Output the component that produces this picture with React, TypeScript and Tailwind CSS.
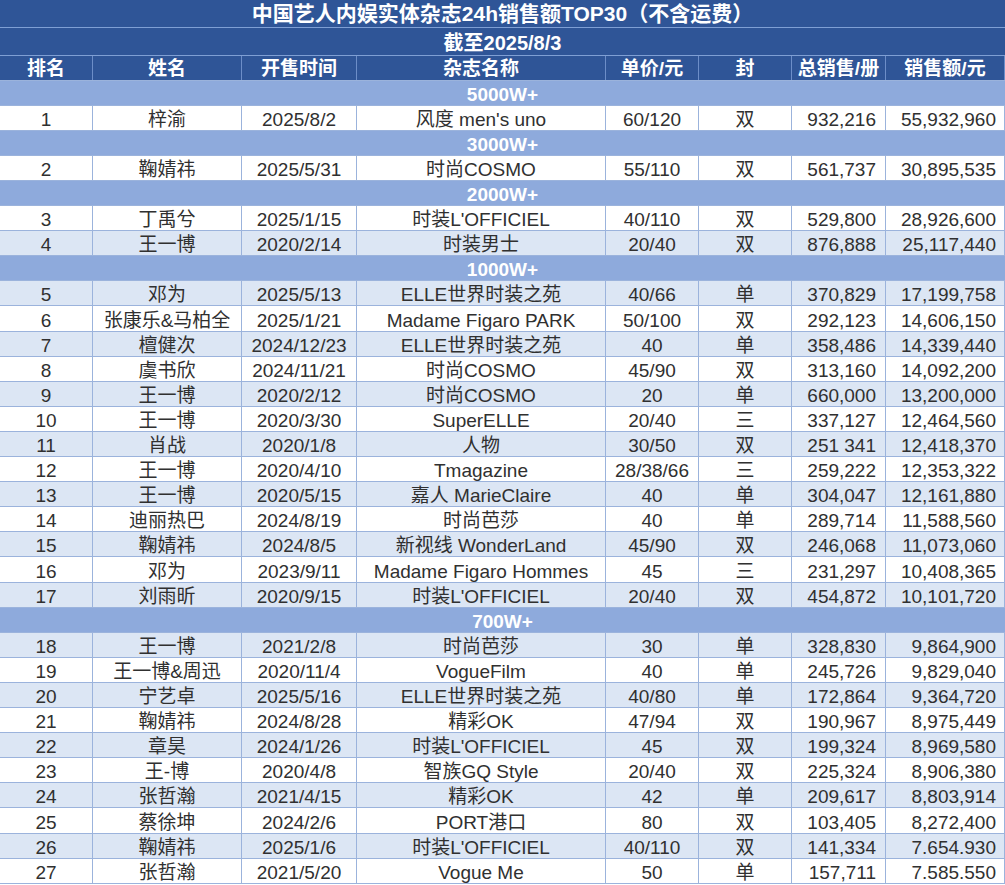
import React from 'react'

type Row = {
  rank: number
  name: string
  date: string
  mag: string
  price: string
  cover: string
  total: string
  amount: string
}

type Section = { label: string; rows: Row[] }

const r = (
  rank: number,
  name: string,
  date: string,
  mag: string,
  price: string,
  cover: string,
  total: string,
  amount: string
): Row => ({ rank, name, date, mag, price, cover, total, amount })

const SECTIONS: Section[] = [
  { label: '5000W+', rows: [r(1, '梓渝', '2025/8/2', "风度 men's uno", '60/120', '双', '932,216', '55,932,960')] },
  { label: '3000W+', rows: [r(2, '鞠婧祎', '2025/5/31', '时尚COSMO', '55/110', '双', '561,737', '30,895,535')] },
  {
    label: '2000W+',
    rows: [
      r(3, '丁禹兮', '2025/1/15', "时装L'OFFICIEL", '40/110', '双', '529,800', '28,926,600'),
      r(4, '王一博', '2020/2/14', '时装男士', '20/40', '双', '876,888', '25,117,440'),
    ],
  },
  {
    label: '1000W+',
    rows: [
      r(5, '邓为', '2025/5/13', 'ELLE世界时装之苑', '40/66', '单', '370,829', '17,199,758'),
      r(6, '张康乐&马柏全', '2025/1/21', 'Madame Figaro PARK', '50/100', '双', '292,123', '14,606,150'),
      r(7, '檀健次', '2024/12/23', 'ELLE世界时装之苑', '40', '单', '358,486', '14,339,440'),
      r(8, '虞书欣', '2024/11/21', '时尚COSMO', '45/90', '双', '313,160', '14,092,200'),
      r(9, '王一博', '2020/2/12', '时尚COSMO', '20', '单', '660,000', '13,200,000'),
      r(10, '王一博', '2020/3/30', 'SuperELLE', '20/40', '三', '337,127', '12,464,560'),
      r(11, '肖战', '2020/1/8', '人物', '30/50', '双', '251 341', '12,418,370'),
      r(12, '王一博', '2020/4/10', 'Tmagazine', '28/38/66', '三', '259,222', '12,353,322'),
      r(13, '王一博', '2020/5/15', '嘉人 MarieClaire', '40', '单', '304,047', '12,161,880'),
      r(14, '迪丽热巴', '2024/8/19', '时尚芭莎', '40', '单', '289,714', '11,588,560'),
      r(15, '鞠婧祎', '2024/8/5', '新视线 WonderLand', '45/90', '双', '246,068', '11,073,060'),
      r(16, '邓为', '2023/9/11', 'Madame Figaro Hommes', '45', '三', '231,297', '10,408,365'),
      r(17, '刘雨昕', '2020/9/15', "时装L'OFFICIEL", '20/40', '双', '454,872', '10,101,720'),
    ],
  },
  {
    label: '700W+',
    rows: [
      r(18, '王一博', '2021/2/8', '时尚芭莎', '30', '单', '328,830', '9,864,900'),
      r(19, '王一博&周迅', '2020/11/4', 'VogueFilm', '40', '单', '245,726', '9,829,040'),
      r(20, '宁艺卓', '2025/5/16', 'ELLE世界时装之苑', '40/80', '单', '172,864', '9,364,720'),
      r(21, '鞠婧祎', '2024/8/28', '精彩OK', '47/94', '双', '190,967', '8,975,449'),
      r(22, '章昊', '2024/1/26', "时装L'OFFICIEL", '45', '双', '199,324', '8,969,580'),
      r(23, '王-博', '2020/4/8', '智族GQ Style', '20/40', '双', '225,324', '8,906,380'),
      r(24, '张哲瀚', '2021/4/15', '精彩OK', '42', '单', '209,617', '8,803,914'),
      r(25, '蔡徐坤', '2024/2/6', 'PORT港口', '80', '双', '103,405', '8,272,400'),
      r(26, '鞠婧祎', '2025/1/6', "时装L'OFFICIEL", '40/110', '双', '141,334', '7.654.930'),
      r(27, '张哲瀚', '2021/5/20', 'Vogue Me', '50', '单', '157,711', '7.585.550'),
    ],
  },
]

// ranks painted light blue in the sheet
const SHADED = new Set([4, 5, 7, 9, 11, 13, 15, 17, 18, 20, 22, 24, 26])
const TALL = new Set([6, 16, 25])

const GRID = 'grid grid-cols-[93px_149px_115px_249px_93px_93px_94px_119px]'
const HEADERS = ['排名', '姓名', '开售时间', '杂志名称', '单价/元', '封', '总销售/册', '销售额/元']

function DataRow({ row }: { row: Row }) {
  const bg = SHADED.has(row.rank) ? 'bg-[#dce6f4]' : 'bg-white'
  const h = TALL.has(row.rank) ? 'h-[26px]' : 'h-[25px]'
  const cell = 'flex items-center pt-[3px] border-r border-[#9bb3dc] whitespace-nowrap'
  return (
    <div className={`${GRID} ${h} ${bg} border-b border-[#9bb3dc] text-[19px] text-[#303030] leading-none`}>
      <div className={`${cell} justify-center`}>{row.rank}</div>
      <div className={`${cell} justify-center`}>{row.name}</div>
      <div className={`${cell} justify-center`}>{row.date}</div>
      <div className={`${cell} justify-center`}>{row.mag}</div>
      <div className={`${cell} justify-center`}>{row.price}</div>
      <div className={`${cell} justify-center`}>{row.cover}</div>
      <div className={`${cell} justify-end pr-[9px]`}>{row.total}</div>
      <div className={`${cell} justify-end pr-[8px]`}>{row.amount}</div>
    </div>
  )
}

export default function App() {
  return (
    <div className="w-[1005px] h-[885px] bg-white overflow-hidden font-['Liberation_Sans','Noto_Sans_CJK_SC',sans-serif]">
      <div className="h-[28px] bg-[#2f5597] border-b border-[#7f9fd4] flex items-center justify-center text-white font-bold text-[21px] leading-none">
        中国艺人内娱实体杂志24h销售额TOP30（不含运费）
      </div>
      <div className="h-[28px] bg-[#2f5597] border-b border-[#7f9fd4] flex items-center justify-center pt-[2px] text-white font-bold text-[20px] leading-none">
        截至2025/8/3
      </div>
      <div className={`${GRID} h-[25px] bg-[#2f5597] border-b border-[#9bb3dc] text-white font-bold text-[19px] leading-none`}>
        {HEADERS.map((h) => (
          <div key={h} className="flex items-center justify-center pt-[1px] border-r border-[#6d8ec8] whitespace-nowrap">
            {h}
          </div>
        ))}
      </div>
      {SECTIONS.map((s) => (
        <div key={s.label}>
          <div className="h-[25px] bg-[#8eaadc] border-b border-[#9bb3dc] flex items-center justify-center pt-[2px] text-white font-bold text-[19px] leading-none">
            {s.label}
          </div>
          {s.rows.map((row) => (
            <DataRow key={row.rank} row={row} />
          ))}
        </div>
      ))}
    </div>
  )
}
